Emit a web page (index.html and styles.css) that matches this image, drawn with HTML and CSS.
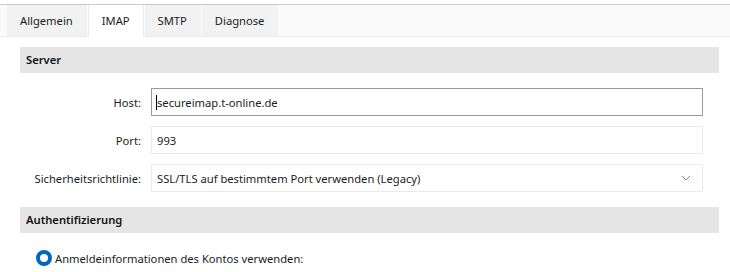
FILE: index.html
```html
<!DOCTYPE html>
<html>
<head>
<meta charset="utf-8">
<link rel="stylesheet" href="styles.css">
</head>
<body>
<div class="tabBar">
    <div class="tab">Allgemein</div>
    <div class="tab tabAtivo">IMAP</div>
    <div class="tab">SMTP</div>
    <div class="tab">Diagnose</div>
</div>

<div class="conteudo">
    <div class="secao">Server</div>

    <div class="formGrid">
        <label class="rotulo" for="host">Host:</label>
        <div class="campo campoFoco">
            <span class="cursor"></span>
            <input id="host" value="secureimap.t-online.de" type="text">
        </div>

        <label class="rotulo" for="port">Port:</label>
        <div class="campo">
            <input id="port" value="993" type="text">
        </div>

        <label class="rotulo">Sicherheitsrichtlinie:</label>
        <div class="campo campoSelect">
            <span class="valorSelect">SSL/TLS auf bestimmtem Port verwenden (Legacy)</span>
            <svg class="seta" width="10" height="6" viewBox="0 0 10 6">
                <path d="M1 1 L5 5 L9 1" fill="none" stroke="#8a8a8a" stroke-width="1"/>
            </svg>
        </div>
    </div>

    <div class="secao">Authentifizierung</div>

    <div class="linhaRadio">
        <span class="radio"></span>
        <span class="radioTexto">Anmeldeinformationen des Kontos verwenden:</span>
    </div>
</div>
</body>
</html>
```

FILE: styles.css
```css
body{
    margin: 0;
    background-color: #fff;
    font-family: "Noto Sans", "Open Sans", sans-serif;
    font-size: 11.2px;
    color: #1b1b1b;
}

.tabBar{
    margin-top: 4px;
    border-top: 1px solid #c9c9c9;
    border-bottom: 1px solid #ebebeb;
    background-color: #fafafa;
    height: 31px;
    padding-left: 7px;
    display: flex;
    gap: 1px;
}

.tab{
    background-color: #f2f2f2;
    padding: 0 14px 0 13px;
    line-height: 31px;
    height: 31px;
}

.tabAtivo{
    background-color: #fff;
    height: 32px;
    padding: 0 13px;
    border-left: 1px solid #ebebeb;
    border-right: 1px solid #ebebeb;
}

.conteudo{
    padding: 10px 11px 0 20px;
}

.secao{
    background-color: #e5e5e5;
    height: 26px;
    line-height: 26px;
    padding-left: 6px;
    font-weight: 600;
    color: #111;
}

.formGrid{
    display: grid;
    grid-template-columns: 121px 1fr;
    column-gap: 10px;
    row-gap: 10px;
    padding: 15px 16px 15px 0;
    align-items: center;
}

.rotulo{
    text-align: right;
}

.campo{
    height: 26px;
    border: 1px solid #ebebeb;
    background-color: #fff;
    display: flex;
    align-items: center;
    padding-left: 5px;
    position: relative;
}

.campoFoco{
    border-color: #9a9a9a;
}

.campo input{
    border: none;
    outline: none;
    background: transparent;
    font-family: inherit;
    font-size: 11.2px;
    color: #1b1b1b;
    padding: 0;
    width: 100%;
}

.cursor{
    position: absolute;
    left: 4px;
    top: 6px;
    width: 1px;
    height: 15px;
    background-color: #000;
}

.campoSelect{
    justify-content: space-between;
    padding-right: 11px;
}

.seta{
    display: block;
}

.linhaRadio{
    display: flex;
    align-items: center;
    padding: 17px 0 0 16px;
}

.radio{
    width: 8px;
    height: 8px;
    border-radius: 50%;
    border: 4px solid #0067c0;
    background-color: #fff;
    margin-right: 3px;
}
```
